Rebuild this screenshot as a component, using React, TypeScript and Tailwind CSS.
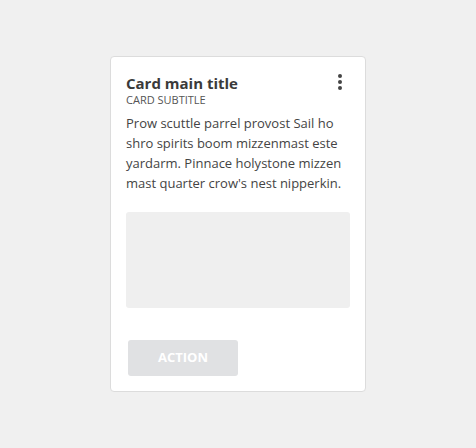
export default function App() {
  return (
    <div className="min-h-[448px] w-full bg-[#f0f0f0] flex justify-center pt-[56px] font-['Open_Sans',sans-serif]">
      <div className="w-[256px] h-[336px] bg-white border border-[#dcdcdc] rounded-[4px] px-[15px] pt-[16px] flex flex-col">
        <div className="flex items-start justify-between">
          <div>
            <div className="text-[15px] leading-[20px] font-bold text-[#3a3a3a]">Card main title</div>
            <div className="text-[11px] leading-[13px] text-[#555]">CARD SUBTITLE</div>
          </div>
          <svg width="6" height="18" viewBox="0 0 6 18" className="mt-[0px] mr-[7px]">
            <circle cx="3" cy="3" r="2" fill="#444" />
            <circle cx="3" cy="9" r="2" fill="#444" />
            <circle cx="3" cy="15" r="2" fill="#444" />
          </svg>
        </div>
        <p className="mt-[7px] text-[13px] leading-[20px] text-[#444]">
          Prow scuttle parrel provost Sail ho shro spirits boom mizzenmast este yardarm. Pinnace holystone mizzen mast quarter crow's nest nipperkin.
        </p>
        <div className="mt-[19px] h-[96px] bg-[#efefef] rounded-[3px]" />
        <div className="mt-[32px] ml-[2px]">
          <button className="w-[110px] h-[36px] bg-[#e0e1e3] rounded-[3px] text-white text-[13px] font-bold">ACTION</button>
        </div>
      </div>
    </div>
  );
}
